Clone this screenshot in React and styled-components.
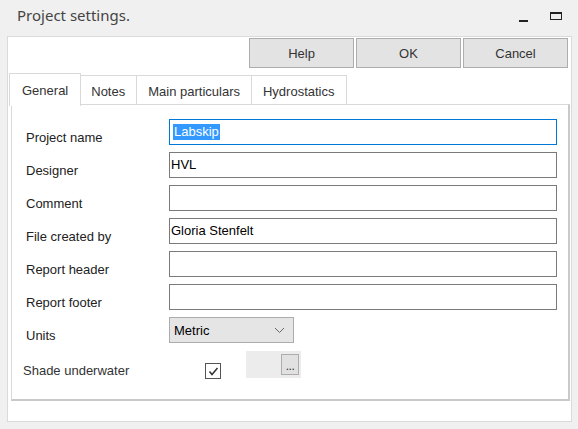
import React, { useState } from "react";
import styled, { createGlobalStyle } from "styled-components";

const GlobalStyle = createGlobalStyle`
  html, body {
    margin: 0;
    padding: 0;
    background: #f0f0f0;
  }
  * {
    box-sizing: border-box;
  }
`;

const fields = [
  { label: "Project name", value: "Labskip", focused: true },
  { label: "Designer", value: "HVL" },
  { label: "Comment", value: "" },
  { label: "File created by", value: "Gloria Stenfelt" },
  { label: "Report header", value: "" },
  { label: "Report footer", value: "" },
];

const tabs = ["General", "Notes", "Main particulars", "Hydrostatics"];

const App = () => {
  const [activeTab, setActiveTab] = useState("General");
  const [shade, setShade] = useState(true);

  return (
    <Window>
      <GlobalStyle />
      <TitleBar>
        <Title>Project settings.</Title>
        <WindowControls>
          <MinimizeIcon />
          <MaximizeIcon />
        </WindowControls>
      </TitleBar>
      <Frame>
        <ButtonBar>
          <DialogButton>Help</DialogButton>
          <DialogButton>OK</DialogButton>
          <DialogButton>Cancel</DialogButton>
        </ButtonBar>
        <TabStrip>
          {tabs.map((t) => (
            <Tab key={t} $active={t === activeTab} onClick={() => setActiveTab(t)}>
              {t}
            </Tab>
          ))}
        </TabStrip>
        <TabPanel>
          <Form>
            {fields.map((f) => (
              <React.Fragment key={f.label}>
                <Label>{f.label}</Label>
                <TextBox $focused={f.focused}>
                  {f.focused ? <Selected>{f.value}</Selected> : f.value}
                </TextBox>
              </React.Fragment>
            ))}
            <Label>Units</Label>
            <SelectBox>
              <span>Metric</span>
              <svg width="11" height="7" viewBox="0 0 11 7">
                <polyline points="1,1 5.5,5.5 10,1" fill="none" stroke="#666" strokeWidth="1" />
              </svg>
            </SelectBox>
          </Form>
          <ShadeRow>
            <ShadeLabel>Shade underwater</ShadeLabel>
            <CheckBox onClick={() => setShade((p) => !p)}>
              {shade && (
                <svg width="13" height="13" viewBox="0 0 13 13">
                  <polyline points="2.5,6.5 5,9.5 10.5,3" fill="none" stroke="#333" strokeWidth="1.5" />
                </svg>
              )}
            </CheckBox>
            <ColourSwatch>
              <EllipsisButton>...</EllipsisButton>
            </ColourSwatch>
          </ShadeRow>
        </TabPanel>
        <StatusBar />
      </Frame>
    </Window>
  );
};

export default App;

const Window = styled.div`
  width: 578px;
  height: 429px;
  display: flex;
  flex-direction: column;
  background: #f0f0f0;
  font-family: "Liberation Sans", Arial, sans-serif;
  font-size: 13px;
  color: #222;
`;

const TitleBar = styled.div`
  height: 36px;
  display: flex;
  align-items: center;
  justify-content: space-between;
  padding: 0 16px 6px 17px;
`;

const Title = styled.div`
  font-family: "Noto Sans", "Open Sans", sans-serif;
  font-size: 15px;
  color: #444;
`;

const WindowControls = styled.div`
  display: flex;
  align-items: flex-end;
  gap: 22px;
  height: 10px;
`;

const MinimizeIcon = styled.div`
  width: 9px;
  height: 2px;
  background: #222;
  margin-bottom: -2px;
`;

const MaximizeIcon = styled.div`
  width: 12px;
  height: 8px;
  border: 1px solid #222;
  border-top-width: 2px;
`;

const Frame = styled.div`
  margin: 0 6px 7px 7px;
  flex: 1;
  display: flex;
  flex-direction: column;
  background: #fff;
  border: 1px solid #dadada;
`;

const ButtonBar = styled.div`
  display: flex;
  justify-content: flex-end;
  gap: 2px;
  padding: 1px 3px 0 0;
`;

const DialogButton = styled.button`
  width: 105px;
  height: 30px;
  background: #e3e3e3;
  border: 1px solid #adadad;
  border-radius: 0;
  font-family: "Liberation Sans", Arial, sans-serif;
  font-size: 13px;
  color: #333;
  padding: 0;
`;

const TabStrip = styled.div`
  display: flex;
  align-items: flex-end;
  height: 37px;
  padding-left: 1px;
`;

const Tab = styled.div`
  height: ${(p) => (p.$active ? "33px" : "30px")};
  padding: ${(p) => (p.$active ? "9px 12px 0" : "8px 11px 0")};
  margin-right: ${(p) => (p.$active ? "-1px" : "0")};
  margin-bottom: ${(p) => (p.$active ? "-1px" : "0")};
  margin-left: ${(p) => (p.$active ? "-2px" : "-1px")};
  border: 1px solid #d9d9d9;
  border-bottom: ${(p) => (p.$active ? "none" : "1px solid #d9d9d9")};
  background: #fff;
  position: relative;
  z-index: ${(p) => (p.$active ? 2 : 1)};
  color: #333;
  cursor: default;
  &:first-child {
    margin-left: 0;
  }
`;

const TabPanel = styled.div`
  height: 297px;
  margin: -1px 1px 0 3px;
  border: 1px solid #d9d9d9;
  border-right: 2px solid #c9c9c9;
  border-bottom: 2px solid #c9c9c9;
  padding: 14px 12px 0 14px;
  display: flex;
  flex-direction: column;
`;

const Form = styled.div`
  display: grid;
  grid-template-columns: 143px 388px;
  grid-auto-rows: 26px;
  row-gap: 7px;
`;

const Label = styled.div`
  padding-top: 12px;
  line-height: 14px;
  color: #222;
`;

const TextBox = styled.div`
  height: 26px;
  border: 1px solid ${(p) => (p.$focused ? "#0078d7" : "#7a7a7a")};
  padding: 4px 3px 0 1px;
  line-height: 16px;
  color: #000;
  background: #fff;
`;

const Selected = styled.span`
  background: #3399ff;
  color: #fff;
  display: inline-block;
  margin-left: 2px;
  padding: 0 1px;
`;

const SelectBox = styled.div`
  width: 125px;
  height: 26px;
  background: #e5e5e5;
  border: 1px solid #acacac;
  display: flex;
  align-items: center;
  justify-content: space-between;
  padding: 0 8px 0 4px;
  color: #000;
`;

const ShadeRow = styled.div`
  display: flex;
  align-items: center;
  margin-top: 7px;
  margin-left: -3px;
`;

const ShadeLabel = styled.div`
  width: 182px;
  padding-top: 11px;
  color: #333;
`;

const CheckBox = styled.div`
  width: 16px;
  height: 16px;
  border: 1px solid #555;
  background: #fff;
  margin-top: 13px;
  display: flex;
  align-items: center;
  justify-content: center;
`;

const ColourSwatch = styled.div`
  width: 55px;
  height: 27px;
  margin-left: 25px;
  background: #ececec;
  display: flex;
  align-items: center;
  justify-content: flex-end;
  padding-right: 2px;
`;

const EllipsisButton = styled.div`
  width: 18px;
  height: 21px;
  background: #e1e1e1;
  border: 1px solid #adadad;
  font-size: 12px;
  line-height: 22px;
  text-align: center;
  color: #333;
  letter-spacing: -0.5px;
`;

const StatusBar = styled.div`
  flex: 1;
  background: #fff;
`;
